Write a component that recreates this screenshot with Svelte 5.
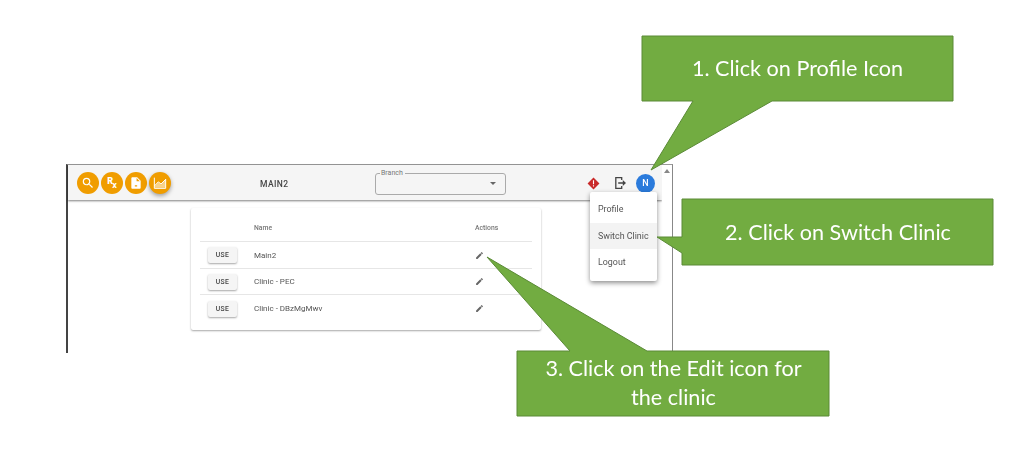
<script>
  const clinics = ['Main2', 'Clinic - PEC', 'Clinic - DBzMgMwv'];
  const menu = ['Profile', 'Switch Clinic', 'Logout'];
</script>

<div class="page">
  <div class="window">
    <div class="main">
      <header class="toolbar">
        <div class="fabs">
          <span class="fab">
            <svg viewBox="0 0 24 24" width="14" height="14"><path fill="#fff" d="M15.5 14h-.79l-.28-.27A6.47 6.47 0 0 0 16 9.5 6.5 6.5 0 1 0 9.5 16c1.61 0 3.09-.59 4.23-1.57l.27.28v.79l5 4.99L20.49 19l-4.99-5zm-6 0C7.01 14 5 11.99 5 9.5S7.01 5 9.5 5 14 7.01 14 9.5 11.99 14 9.5 14z"/></svg>
          </span>
          <span class="fab rx"><b>R</b><i>x</i></span>
          <span class="fab">
            <svg viewBox="0 0 24 24" width="14" height="14"><path fill="#fff" d="M14 2H6c-1.1 0-2 .9-2 2v16c0 1.1.9 2 2 2h12c1.1 0 2-.9 2-2V8l-6-6zm-4 14h4v2h-4v-2zm3-7V3.5L18.5 9H13z"/></svg>
          </span>
          <span class="fab raised">
            <svg viewBox="0 0 24 24" width="16" height="16"><path fill="#fff" opacity=".55" d="M4 17l5.5-6 4 3.2L20 7v12H4z"/><path fill="none" stroke="#fff" stroke-width="1.5" d="M3.5 4v16H20.5V6"/><path fill="none" stroke="#fff" stroke-width="1.5" d="M3.5 16.5l6-6.2 4 3.2L20.5 6.500"/></svg>
          </span>
        </div>
        <div class="title">MAIN2</div>
        <div class="branch">
          <span class="branch-label">Branch</span>
          <span class="caret"></span>
        </div>
        <div class="tools">
          <svg class="alert" viewBox="0 0 14 14" width="13" height="13"><path fill="#c92a2a" d="M7 .6l6.4 6.4L7 13.4.6 7z"/><path fill="#fff" d="M6.4 3.6h1.2v4.2H6.4zM6.4 8.8h1.2v1.3H6.400z"/></svg>
          <svg class="logout" viewBox="0 0 14 14" width="14" height="14"><path fill="none" stroke="#444" stroke-width="1.3" d="M8.7 4V1.700H2.800v10.600h5.900V10"/><path fill="#444" d="M5.200 6.200h4.600V3.900L13 7l-3.200 3.100V7.800H5.200z"/></svg>
          <span class="avatar">N</span>
        </div>
      </header>
      <section class="card">
        <div class="row head"><span></span><span>Name</span><span>Actions</span></div>
        {#each clinics as name}
          <div class="row">
            <span><button class="use">USE</button></span>
            <span>{name}</span>
            <span class="edit"><svg viewBox="0 0 24 24" width="9" height="9"><path fill="#666" d="M3 17.25V21h3.75L17.81 9.94l-3.75-3.75L3 17.25zM20.71 7.04a1 1 0 0 0 0-1.41l-2.34-2.34a1 1 0 0 0-1.41 0l-1.83 1.83 3.75 3.75 1.83-1.83z"/></svg></span>
          </div>
        {/each}
      </section>
    </div>
    <div class="scrollbar"><span class="up"></span></div>
    <nav class="menu">
      {#each menu as item, i}
        <div class="item" class:active={i === 1}>{item}</div>
      {/each}
    </nav>
  </div>

  <svg class="callouts" viewBox="0 0 1024 454" width="1024" height="454">
    <g class="shape">
      <path d="M642 36H953V101H772L651 170 693 101H642Z"/>
      <path d="M682 199H993V265H682V253L657 237H682Z"/>
      <path d="M517 351H570L487 257 647 351H829V416H517Z"/>
    </g>
    <g class="label">
      <text x="797.5" y="75.500">1. Click on Profile Icon</text>
      <text x="838" y="240">2. Click on Switch Clinic</text>
      <text x="673.500" y="376">3. Click on the Edit icon for</text>
      <text x="673.500" y="405">the clinic</text>
    </g>
  </svg>
</div>

<style>
  :global(body) {
    margin: 0;
    background: #fff;
  }
  .page {
    position: relative;
    width: 1024px;
    height: 454px;
    overflow: hidden;
    padding: 164px 0 0 66px;
    box-sizing: border-box;
    font-family: Roboto, "Liberation Sans", sans-serif;
  }
  .window {
    position: relative;
    display: flex;
    width: 607px;
    height: 189px;
    box-sizing: border-box;
    border-left: 2px solid #444;
    border-top: 1px solid #999;
    border-right: 1px solid #888;
    filter: blur(0.4px);
  }
  .main {
    flex: 1;
    min-width: 0;
  }
  .toolbar {
    display: flex;
    align-items: center;
    height: 35px;
    box-sizing: border-box;
    background: #f5f5f5;
    box-shadow: 0 1px 2px rgba(0, 0, 0, 0.5);
    padding-left: 9px;
  }
  .fabs {
    display: flex;
    gap: 2px;
    width: 183px;
    flex: none;
    padding-top: 1px;
  }
  .fab {
    display: flex;
    align-items: center;
    justify-content: center;
    width: 22px;
    height: 22px;
    border-radius: 50%;
    background: #f09d00;
    color: #fff;
  }
  .raised {
    box-shadow: 0 2px 4px rgba(0, 0, 0, 0.35);
  }
  .rx {
    font-size: 9px;
    font-weight: 700;
    line-height: 1;
  }
  .rx b {
    margin-top: -4px;
  }
  .rx i {
    font-style: normal;
    margin: 4px 0 0 -1px;
  }
  .title {
    width: 115px;
    flex: none;
    font-size: 8.5px;
    font-weight: 500;
    letter-spacing: 0.4px;
    color: #444;
    padding-top: 2px;
  }
  .branch {
    position: relative;
    width: 131px;
    height: 22px;
    flex: none;
    box-sizing: border-box;
    border: 1px solid #aaa;
    border-radius: 3px;
    margin-top: 2px;
  }
  .branch-label {
    position: absolute;
    left: 4px;
    top: -5px;
    padding: 0 2px 0 1px;
    background: #f5f5f5;
    font-size: 7px;
    line-height: 8px;
    color: #777;
  }
  .caret {
    position: absolute;
    right: 9px;
    top: 8px;
    border: 3px solid transparent;
    border-top: 3px solid #666;
    border-bottom: 0;
  }
  .tools {
    display: flex;
    align-items: center;
    margin-left: 81px;
    padding-top: 1px;
  }
  .logout {
    margin-left: 13px;
  }
  .avatar {
    display: flex;
    align-items: center;
    justify-content: center;
    width: 19px;
    height: 19px;
    margin-left: 9px;
    border-radius: 50%;
    background: #2b7bdc;
    color: #fff;
    font-size: 9px;
    font-weight: 500;
  }
  .card {
    width: 332px;
    height: 122px;
    margin: 8px 0 0 123px;
    padding: 0 9px;
    background: #fff;
    border-radius: 2px;
    box-shadow: 0 1px 2px rgba(0, 0, 0, 0.35);
  }
  .row {
    display: grid;
    grid-template-columns: 54px 221px 1fr;
    align-items: center;
    height: 26.5px;
    padding-top: 1px;
    border-bottom: 1px solid #e6e6e6;
    box-sizing: border-box;
    font-size: 8px;
    color: #555;
  }
  .row:last-child {
    border-bottom: 0;
  }
  .head {
    height: 34px;
    padding-top: 7px;
    font-size: 6.8px;
    font-weight: 500;
    color: #777;
  }
  .use {
    display: block;
    width: 29px;
    height: 16px;
    margin-left: 8px;
    padding: 0;
    border: 0;
    border-radius: 2px;
    background: #f5f5f5;
    box-shadow: 0 1px 2px rgba(0, 0, 0, 0.35);
    font: 500 6.8px Roboto, sans-serif;
    letter-spacing: 0.3px;
    color: #444;
  }
  .edit {
    display: flex;
  }
  .scrollbar {
    width: 10px;
    flex: none;
    background: #fff;
  }
  .up {
    display: block;
    width: 0;
    margin: 4px auto 0;
    border: 3px solid transparent;
    border-bottom: 4px solid #888;
    border-top: 0;
  }
  .menu {
    position: absolute;
    left: 522px;
    top: 27px;
    width: 67px;
    padding: 4px 0 5px;
    background: #fff;
    border-radius: 2px;
    box-shadow: 0 2px 5px rgba(0, 0, 0, 0.45);
  }
  .item {
    display: flex;
    align-items: center;
    height: 26.5px;
    padding-left: 8px;
    font-size: 8.9px;
    color: #555;
    white-space: nowrap;
  }
  .active {
    background: #f3f3f3;
  }
  .callouts {
    position: absolute;
    left: 0;
    top: 0;
  }
  .shape {
    fill: #72ac41;
    stroke: #5a8a36;
    stroke-width: 1;
  }
  .label {
    fill: #fff;
    font-family: Lato, "Open Sans", sans-serif;
    font-size: 21.6px;
    text-anchor: middle;
  }
</style>
